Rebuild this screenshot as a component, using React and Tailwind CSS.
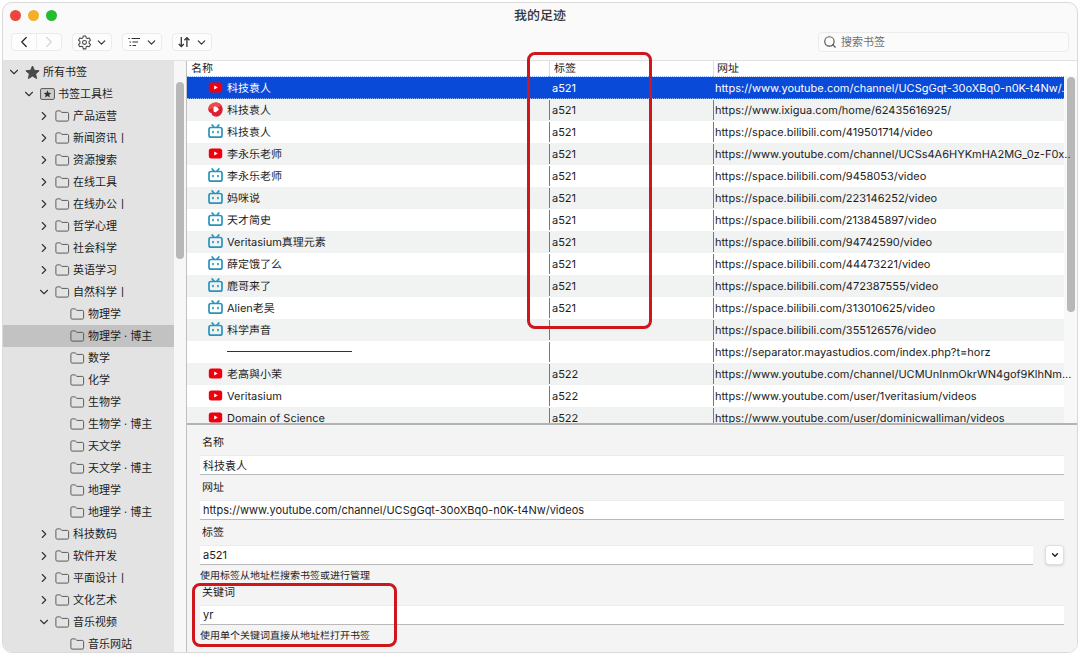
import { ChevronDown, ChevronLeft, ChevronRight, Search } from "lucide-react";
import clsx from "clsx";

const treeItems = [
  { label: "所有书签", level: 0, state: "open", icon: "star" },
  { label: "书签工具栏", level: 1, state: "open", icon: "toolbar" },
  { label: "产品运营", level: 2, state: "closed" },
  { label: "新闻资讯丨", level: 2, state: "closed" },
  { label: "资源搜索", level: 2, state: "closed" },
  { label: "在线工具", level: 2, state: "closed" },
  { label: "在线办公丨", level: 2, state: "closed" },
  { label: "哲学心理", level: 2, state: "closed" },
  { label: "社会科学", level: 2, state: "closed" },
  { label: "英语学习", level: 2, state: "closed" },
  { label: "自然科学丨", level: 2, state: "open" },
  { label: "物理学", level: 3 },
  { label: "物理学 · 博主", level: 3, selected: true },
  { label: "数学", level: 3 },
  { label: "化学", level: 3 },
  { label: "生物学", level: 3 },
  { label: "生物学 · 博主", level: 3 },
  { label: "天文学", level: 3 },
  { label: "天文学 · 博主", level: 3 },
  { label: "地理学", level: 3 },
  { label: "地理学 · 博主", level: 3 },
  { label: "科技数码", level: 2, state: "closed" },
  { label: "软件开发", level: 2, state: "closed" },
  { label: "平面设计丨", level: 2, state: "closed" },
  { label: "文化艺术", level: 2, state: "closed" },
  { label: "音乐视频", level: 2, state: "open" },
  { label: "音乐网站", level: 3 },
];

const bookmarks = [
  { site: "youtube", name: "科技袁人", tag: "a521", url: "https://www.youtube.com/channel/UCSgGqt-30oXBq0-n0K-t4Nw/..", selected: true },
  { site: "ixigua", name: "科技袁人", tag: "a521", url: "https://www.ixigua.com/home/62435616925/" },
  { site: "bilibili", name: "科技袁人", tag: "a521", url: "https://space.bilibili.com/419501714/video" },
  { site: "youtube", name: "李永乐老师", tag: "a521", url: "https://www.youtube.com/channel/UCSs4A6HYKmHA2MG_0z-F0x.." },
  { site: "bilibili", name: "李永乐老师", tag: "a521", url: "https://space.bilibili.com/9458053/video" },
  { site: "bilibili", name: "妈咪说", tag: "a521", url: "https://space.bilibili.com/223146252/video" },
  { site: "bilibili", name: "天才简史", tag: "a521", url: "https://space.bilibili.com/213845897/video" },
  { site: "bilibili", name: "Veritasium真理元素", tag: "a521", url: "https://space.bilibili.com/94742590/video" },
  { site: "bilibili", name: "薛定饿了么", tag: "a521", url: "https://space.bilibili.com/44473221/video" },
  { site: "bilibili", name: "鹿哥来了", tag: "a521", url: "https://space.bilibili.com/472387555/video" },
  { site: "bilibili", name: "Alien老吴", tag: "a521", url: "https://space.bilibili.com/313010625/video" },
  { site: "bilibili", name: "科学声音", tag: "", url: "https://space.bilibili.com/355126576/video" },
  { site: "separator", name: "", tag: "", url: "https://separator.mayastudios.com/index.php?t=horz" },
  { site: "youtube", name: "老高與小茉", tag: "a522", url: "https://www.youtube.com/channel/UCMUnInmOkrWN4gof9KlhNm..." },
  { site: "youtube", name: "Veritasium", tag: "a522", url: "https://www.youtube.com/user/1veritasium/videos" },
  { site: "youtube", name: "Domain of Science", tag: "a522", url: "https://www.youtube.com/user/dominicwalliman/videos" },
];

const levelPadding = ["pl-1", "pl-[19px]", "pl-[34px]", "pl-[49px]"];

function FolderIcon() {
  return (
    <svg className="h-3 w-[15px] shrink-0" viewBox="0 0 15 12" fill="none" stroke="#5c5c5c" strokeWidth="1">
      <path d="M.9 2.2a1.3 1.3 0 0 1 1.3-1.3h2.6c.5 0 .8.2 1.1.5l.8 1h5.6a1.3 1.3 0 0 1 1.3 1.3v6.1a1.3 1.3 0 0 1-1.3 1.3H2.2A1.3 1.3 0 0 1 .9 9.8z" />
    </svg>
  );
}

function StarIcon() {
  return (
    <svg className="h-[15px] w-[15px] shrink-0" viewBox="0 0 15 15" fill="#4a4a4a" stroke="#4a4a4a" strokeLinejoin="round">
      <path d="M7.5 1l1.9 4.3 4.7.5-3.5 3.1 1 4.6-4.1-2.4-4.1 2.4 1-4.6L.9 5.8l4.7-.5z" />
    </svg>
  );
}

function ToolbarIcon() {
  return (
    <svg className="h-3 w-[15px] shrink-0" viewBox="0 0 15 12">
      <rect x=".6" y=".6" width="13.8" height="10.8" rx="1.2" fill="#cfcfcf" stroke="#555" />
      <path d="M7.5 2.2l1.1 2.5 2.7.3-2 1.8.6 2.7-2.4-1.4-2.4 1.4.6-2.7-2-1.8 2.7-.3z" fill="#333" />
    </svg>
  );
}

function GearIcon() {
  return (
    <svg className="h-[15px] w-[15px]" viewBox="0 0 16 16" fill="none" stroke="#444" strokeWidth="1.1" strokeLinejoin="round">
      <path d="M6.6 1.1h2.8l.4 2 1.2.7 2-.7 1.4 2.4-1.5 1.4v1.9l1.5 1.4-1.4 2.4-2-.7-1.2.7-.4 2.2H6.6l-.4-2.2-1.2-.7-2 .7-1.4-2.4 1.5-1.4V6.9L1.6 5.5 3 3.1l2 .7 1.2-.7z" />
      <circle cx="8" cy="7.9" r="2.1" />
    </svg>
  );
}

function ListIcon() {
  return (
    <svg className="h-[10px] w-3" viewBox="0 0 12 10" stroke="#333" strokeWidth="1.2">
      <path d="M.3 1.5h1.5M3.5 1.5H12M1.5 5H3M4.5 5H10M1.5 8.5H3M4.5 8.5H8" />
    </svg>
  );
}

function SortIcon() {
  return (
    <svg className="h-3 w-3" viewBox="0 0 12 12" fill="none" stroke="#333" strokeWidth="1.3">
      <path d="M3.3 1v9.500M.8 8l2.500 2.600L5.800 8M8.900 11V1.800M6.400 4.200l2.500-2.600 2.500 2.600" />
    </svg>
  );
}

function SiteIcon({ site }) {
  if (site === "youtube") {
    return (
      <svg className="h-[15px] w-[15px] shrink-0" viewBox="0 0 15 15">
        <rect x=".8" y="2.5" width="13.4" height="10" rx="2.5" fill="#f0000f" />
        <path d="M6.2 5.6l3.6 1.900-3.600 1.900z" fill="#fff" />
      </svg>
    );
  }
  if (site === "ixigua") {
    return (
      <svg className="h-[15px] w-[15px] shrink-0" viewBox="0 0 15 15">
        <path d="M8 .4c3.800 0 6.700 3 6.700 6.800 0 4.300-3 7.500-6.600 7.500-2.600 0-4.300-1.400-4.600-3.600C1.500 10.600.3 9.200.3 7.400.3 3.600 3.600.4 8 .4z" fill="#dc2034" />
        <path d="M.3 7.400C.3 3.600 3.600.4 8 .4c2.500 0 4.600 1.300 5.800 3.300L9 5.500z" fill="#ee4a48" />
        <path d="M5.500 6c0-1.300 1-1.900 2.100-1.400l2.200 1.200c1.200.7 1.200 2.200 0 2.900L8 9.900c-1.200.7-2.500 0-2.500-1.400z" fill="#fff" />
      </svg>
    );
  }
  if (site === "bilibili") {
    return (
      <svg className="h-[15px] w-[15px] shrink-0" viewBox="0 0 15 15" fill="none" stroke="#2b93ba" strokeWidth="1.7" strokeLinecap="round">
        <rect x="1" y="3.5" width="13" height="9.7" rx="2" />
        <path d="M4.2 1l1.6 1.9M10.8 1L9.2 2.9M5 7.5v1M10 7.5v1" />
      </svg>
    );
  }
  return <span className="h-[15px] w-[15px] shrink-0" />;
}

function TreeRow({ item }) {
  const Chevron = item.state === "open" ? ChevronDown : ChevronRight;
  return (
    <li>
      <button
        type="button"
        className={clsx(
          "flex h-[22px] w-full items-center whitespace-nowrap text-left",
          levelPadding[item.level],
          item.selected && "bg-[#c2c2c2]"
        )}
      >
        <span className="flex w-[18px] shrink-0 items-center">
          {item.state && <Chevron size={14} strokeWidth={1.9} color="#333" />}
        </span>
        {item.icon === "star" && <StarIcon />}
        {item.icon === "toolbar" && <ToolbarIcon />}
        {!item.icon && <FolderIcon />}
        <span className="pl-[3px] leading-[22px]">{item.label}</span>
      </button>
    </li>
  );
}

function ToolbarMenu({ label, children }) {
  return (
    <button
      type="button"
      aria-label={label}
      className="flex h-[18px] w-10 items-center justify-between rounded border border-[#ebebeb] bg-[#fdfdfd] px-[3px]"
    >
      <span className="flex w-4 items-center justify-center">{children}</span>
      <ChevronDown size={13} strokeWidth={2.2} color="#333" />
    </button>
  );
}

function BookmarkRow({ item }) {
  return (
    <tr
      className={clsx(
        "h-[22px]",
        item.selected ? "bg-[#0a4ad8] text-white" : "odd:bg-white even:bg-[#f1f3f3]"
      )}
    >
      <td className={clsx("p-0", item.selected && "border-y border-dotted border-[#8fb0f5]")}>
        <div className="flex h-5 items-center pl-[21px]">
          <SiteIcon site={item.site} />
          {item.site === "separator" ? (
            <hr className="ml-1 w-[125px] border-t border-[#333]" />
          ) : (
            <span className="truncate pl-1 leading-5">{item.name}</span>
          )}
        </div>
      </td>
      {[item.tag, item.url].map((text, i) => (
        <td key={i} className={clsx("p-0", item.selected && "border-y border-dotted border-[#8fb0f5]")}>
          <div
            className={clsx(
              "h-5 border-l leading-5 whitespace-nowrap",
              i === 0 ? "pl-0.5" : "pl-px",
              item.selected ? "border-[#0a4ad8]" : "border-[#777]"
            )}
          >
            {text}
          </div>
        </td>
      ))}
    </tr>
  );
}

function Field({ id, label, value, hint, children }) {
  return (
    <div>
      <label htmlFor={id} className="block pb-[5px] pl-0.5 leading-[15px]">
        {label}
      </label>
      <div className="flex items-center gap-3">
        <input
          id={id}
          type="text"
          defaultValue={value}
          className="h-5 min-w-0 flex-1 border-t border-b border-t-[#ececec] border-b-[#b9b9b9] bg-white px-[3px] outline-none"
        />
        {children}
      </div>
      {hint && <p className="mt-[3px] text-[10px] leading-4">{hint}</p>}
    </div>
  );
}

export default function App() {
  return (
    <div className="h-screen bg-[#fefefe] p-0.5 font-[Inter,'Noto_Sans_CJK_SC',sans-serif] text-[11px] text-[#1c1c1c] [text-rendering:geometricPrecision]">
      <div className="flex h-full flex-col overflow-hidden rounded-[10px] border border-[#dadada] bg-[#fafafa]">
        <header className="border-b border-[#e2e2e2] pb-1">
          <div className="grid h-[25px] grid-cols-[1fr_auto_1fr] items-center px-[7px]">
            <div className="flex gap-[7px]">
              <span className="h-[11px] w-[11px] rounded-full bg-[#f0443f]" />
              <span className="h-[11px] w-[11px] rounded-full bg-[#f5ae27]" />
              <span className="h-[11px] w-[11px] rounded-full bg-[#22bd31]" />
            </div>
            <h1 className="text-[13px] leading-5 font-medium text-[#333]">我的足迹</h1>
          </div>
          <div className="flex h-7 items-center gap-2.5 px-2">
            <div className="flex h-[18px] w-[51px] rounded border border-[#ebebeb] bg-[#fdfdfd]">
              <button type="button" aria-label="后退" className="flex flex-1 items-center justify-center border-r border-[#eeeeee]">
                <ChevronLeft size={18} strokeWidth={1.6} color="#222" />
              </button>
              <button type="button" aria-label="前进" disabled className="flex flex-1 items-center justify-center">
                <ChevronRight size={18} strokeWidth={1.6} color="#d5d5d5" />
              </button>
            </div>
            <ToolbarMenu label="管理">
              <GearIcon />
            </ToolbarMenu>
            <ToolbarMenu label="视图">
              <ListIcon />
            </ToolbarMenu>
            <ToolbarMenu label="导入和备份">
              <SortIcon />
            </ToolbarMenu>
            <label className="ml-auto flex h-5 w-[251px] items-center gap-1 rounded border border-[#ececec] bg-[#fbfbfb] px-1">
              <Search size={14} strokeWidth={2} color="#555" />
              <input
                type="search"
                aria-label="搜索书签"
                placeholder="搜索书签"
                className="min-w-0 flex-1 bg-transparent outline-none placeholder:text-[#707070]"
              />
            </label>
          </div>
        </header>

        <div className="flex min-h-0 flex-1">
          <aside className="flex w-[184px] shrink-0 overflow-hidden border-r border-[#c0c0c0]">
            <ul className="min-w-0 flex-1 overflow-hidden bg-[#e3e3e3]">
              {treeItems.map((item) => (
                <TreeRow key={item.label} item={item} />
              ))}
            </ul>
            <div className="w-3 bg-[#f7f7f7] px-0.5 pt-[21px]">
              <div className="h-[177px] rounded-full bg-[#b8b8b8]" />
            </div>
          </aside>

          <main className="relative flex min-w-0 flex-1 flex-col">
            <div className="flex min-h-0 flex-1 overflow-hidden bg-white">
              <div className="z-10 min-w-0 flex-1">
                <table className="w-full table-fixed border-collapse">
                  <colgroup>
                    <col />
                    <col className="w-[164px]" />
                    <col className="w-[351px]" />
                  </colgroup>
                  <thead>
                    <tr className="h-[15px] text-left leading-[15px]">
                      <th className="p-0 pl-1 font-normal">名称</th>
                      <th className="p-0 font-normal">
                        <div className="border-l border-[#dedede] pl-1">标签</div>
                      </th>
                      <th className="p-0 font-normal">
                        <div className="border-l border-[#dedede] pl-[3px]">网址</div>
                      </th>
                    </tr>
                  </thead>
                  <tbody>
                    {bookmarks.map((item) => (
                      <BookmarkRow key={item.url} item={item} />
                    ))}
                  </tbody>
                </table>
              </div>
              <div className="flex w-[13px] flex-col">
                <div className="h-[15px]" />
                <div className="flex-1 bg-[#f8f8f8] pt-px pr-0.5 pl-[3px]">
                  <div className="h-[235px] rounded-full bg-[#b8b8b8]" />
                </div>
              </div>
            </div>

            <section className="z-10 flex flex-col gap-[5px] border-t-2 border-[#b4b4b4] bg-[#f4f4f4] px-[13px] pt-2.5 pb-2">
              <Field id="name" label="名称" value="科技袁人" />
              <Field id="url" label="网址" value="https://www.youtube.com/channel/UCSgGqt-30oXBq0-n0K-t4Nw/videos" />
              <div className="-mb-1">
                <Field id="tags" label="标签" value="a521" hint="使用标签从地址栏搜索书签或进行管理">
                  <button
                    type="button"
                    aria-label="显示所有标签"
                    className="flex h-5 w-[19px] items-center justify-center rounded border border-[#dedede] bg-white shadow-sm"
                  >
                    <ChevronDown size={10} strokeWidth={3.5} color="#222" />
                  </button>
                </Field>
              </div>
              <div className="relative">
                <Field id="keyword" label="关键词" value="yr" hint="使用单个关键词直接从地址栏打开书签" />
                <div className="pointer-events-none absolute -top-0.5 -left-2 h-16 w-[205px] rounded-lg border-3 border-[#d0161d]" />
              </div>
            </section>

            {/* highlight around the tag column */}
            <div className="pointer-events-none absolute -top-[9px] right-[425px] z-10 h-[277px] w-[125px] rounded-lg border-3 border-[#d0161d]" />
          </main>
        </div>
      </div>
    </div>
  );
}
